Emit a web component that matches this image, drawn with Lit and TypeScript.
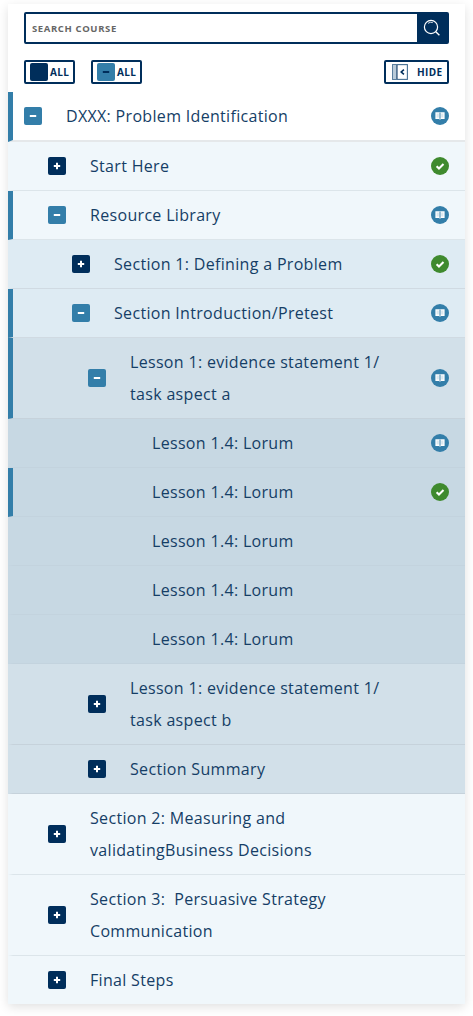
import { LitElement, html, css, svg } from "lit";
import { customElement } from "lit/decorators.js";

type Row = { t: string; lvl: string; icon?: "plus" | "minus"; status?: "book" | "check"; bg: string; bar?: boolean; last?: boolean };

const rows: Row[] = [
  { t: "DXXX: Problem Identification", lvl: "l0", icon: "minus", status: "book", bg: "b0", bar: true },
  { t: "Start Here", lvl: "l1", icon: "plus", status: "check", bg: "b1" },
  { t: "Resource Library", lvl: "l1", icon: "minus", status: "book", bg: "b1", bar: true },
  { t: "Section 1: Defining a Problem", lvl: "l2", icon: "plus", status: "check", bg: "b2" },
  { t: "Section Introduction/Pretest", lvl: "l2", icon: "minus", status: "book", bg: "b2", bar: true },
  { t: "Lesson 1: evidence statement 1/ task aspect a", lvl: "l3", icon: "minus", status: "book", bg: "b3", bar: true },
  { t: "Lesson 1.4: Lorum", lvl: "l4", status: "book", bg: "b4" },
  { t: "Lesson 1.4: Lorum", lvl: "l4", status: "check", bg: "b4", bar: true },
  { t: "Lesson 1.4: Lorum", lvl: "l4", bg: "b4" },
  { t: "Lesson 1.4: Lorum", lvl: "l4", bg: "b4" },
  { t: "Lesson 1.4: Lorum", lvl: "l4", bg: "b4" },
  { t: "Lesson 1: evidence statement 1/ task aspect b", lvl: "l3", icon: "plus", bg: "b3" },
  { t: "Section Summary", lvl: "l3", icon: "plus", bg: "b3" },
  { t: "Section 2: Measuring and validatingBusiness Decisions", lvl: "l1", icon: "plus", bg: "b1" },
  { t: "Section 3:\u00a0 Persuasive Strategy Communication", lvl: "l1", icon: "plus", bg: "b1" },
  { t: "Final Steps", lvl: "l1", icon: "plus", bg: "b1", last: true },
];

const glyph = (k: "plus" | "minus", color: string) =>
  k === "plus"
    ? svg`<svg viewBox="0 0 18 18" width="18" height="18"><path d="M9 5.8v6.4M5.8 9h6.4" stroke=${color} stroke-width="2" fill="none"/></svg>`
    : svg`<svg viewBox="0 0 18 18" width="18" height="18"><path d="M5.8 9h6.4" stroke=${color} stroke-width="2" fill="none"/></svg>`;

const book = svg`<svg viewBox="0 0 18 18" width="18" height="18"><path d="M4.4 5.3h9.2v6.6H9.9l-.9.8-.9-.8H4.4z" fill="#fff"/><path d="M9 5.6v6.2" stroke="#337ea9" stroke-width="1"/><path d="M5.6 6.6h2.3v3.8H5.6zM10.1 6.6h2.3v3.8h-2.3z" fill="#337ea9" opacity=".18"/></svg>`;
const check = svg`<svg viewBox="0 0 18 18" width="18" height="18"><path d="M5.6 9.2l2.4 2.3 4.5-4.4" stroke="#fff" stroke-width="2.1" fill="none"/></svg>`;

@customElement("app-root")
export class AppRoot extends LitElement {
  static styles = css`
    :host { display: block; width: 473px; height: 1016px; background: #fff; font-family: "Open Sans", sans-serif; overflow: hidden; }
    .panel { margin: 4px 8px 0; width: 457px; height: 1000px; background: #fff; box-shadow: 0 3px 10px rgba(0,0,0,.12); box-sizing: border-box; padding-top: 8px; }
    .search { margin: 0 16px; height: 32px; display: flex; box-sizing: border-box; border: 2px solid #002e5b; border-radius: 2px; background: #fff; }
    .search .ph { flex: 1; display: flex; align-items: center; padding-left: 6px; font-size: 9.5px; font-weight: 700; letter-spacing: .62px; color: #666; }
    .search .go { width: 30px; background: #002e5b; display: flex; align-items: center; justify-content: center; }
    .tools { margin: 16px 16px 8px; display: flex; gap: 16px; height: 24px; }
    .btn { box-sizing: border-box; height: 24px; border: 2px solid #002e5b; border-radius: 2px; display: flex; align-items: center; font-size: 10px; font-weight: 700; letter-spacing: .4px; color: #002e5b; background: #fff; }
    .all { width: 51px; padding-left: 4px; gap: 2px; }
    .sw { width: 18px; height: 18px; border-radius: 2px; display: block; flex: none; }
    .hide { width: 65px; margin-left: auto; padding-left: 6px; gap: 9px; letter-spacing: .4px; }
    .row { display: flex; align-items: center; box-sizing: border-box; padding: 8px 16px 8px 0; border-bottom: 1px solid #d8dfe4; border-left: 5px solid transparent; color: #153e66; font-size: 16px; line-height: 32px; letter-spacing: .32px; }
    .row.bar { border-left-color: #337ea9; }
    .row.first { border-bottom: 2px solid #e5e8ea; }
    .row.last { border-bottom: 0; }
    .b0 { background: #fff; }
    .b1 { background: #f0f7fb; border-bottom-color: #dce5ea; }
    .b2 { background: #deebf3; border-bottom-color: #d0dae2; }
    .b3 { background: #d2e0e9; border-bottom-color: #c6d2db; }
    .b4 { background: #c7d8e3; border-bottom-color: #c3d3de; }
    .row:not(.bar).b1 { border-left-color: #f0f7fb; }
    .row:not(.bar).b0 { border-left-color: #fff; }
    .row:not(.bar).b2 { border-left-color: #deebf3; }
    .row:not(.bar).b3 { border-left-color: #d2e0e9; }
    .row:not(.bar).b4 { border-left-color: #c7d8e3; }
    .l0 { padding-left: 11px; } .l1 { padding-left: 35px; } .l2 { padding-left: 59px; } .l3 { padding-left: 75px; } .l4 { padding-left: 139px; }
    .tw { width: 18px; height: 18px; border-radius: 2px; margin-right: 24px; flex: none; display: block; }
    .plus { background: #002e5b; } .minus { background: #337ea9; }
    .text { flex: 1; padding-right: 40px; min-width: 0; }
    .st { width: 18px; height: 18px; border-radius: 50%; flex: none; display: block; }
    .st.book { background: #337ea9; } .st.check { background: #3f8a2e; }
    svg { display: block; }
  `;

  render() {
    return html`<div class="panel">
      <div class="search">
        <div class="ph">SEARCH COURSE</div>
        <div class="go"><svg viewBox="0 0 20 20" width="20" height="20"><circle cx="9" cy="9" r="6.6" fill="none" stroke="#fff" stroke-width="1.2"/><path d="M13.8 13.8l3.6 3.4" stroke="#fff" stroke-width="1.4"/><path d="M6 5.4A4.6 4.6 0 0 1 10.8 4.6" stroke="#fff" stroke-width=".8" fill="none"/></svg></div>
      </div>
      <div class="tools">
        <div class="btn all"><span class="sw plus"></span>ALL</div>
        <div class="btn all"><span class="sw minus">${glyph("minus", "#002e5b")}</span>ALL</div>
        <div class="btn hide"><svg viewBox="0 0 18 18" width="16" height="16"><rect x=".7" y=".7" width="16.6" height="16.6" fill="#fff" stroke="#3f6a8f" stroke-width="1.2"/><rect x="1" y="1" width="4.5" height="16" fill="#b9cbd9"/><path d="M5.6 1v16" stroke="#002e5b" stroke-width="1.2"/><path d="M13.4 6.4L10.4 9l3 2.6" stroke="#002e5b" stroke-width="1.8" fill="none"/></svg>HIDE</div>
      </div>
      ${rows.map((r, i) => html`<div class="row ${r.lvl} ${r.bg} ${r.bar ? "bar" : ""} ${i === 0 ? "first" : ""} ${r.last ? "last" : ""}">
        ${r.icon ? html`<span class="tw ${r.icon}">${glyph(r.icon, "#fff")}</span>` : ""}
        <span class="text">${r.t}</span>
        ${r.status ? html`<span class="st ${r.status}">${r.status === "book" ? book : check}</span>` : ""}
      </div>`)}
    </div>`;
  }
}
